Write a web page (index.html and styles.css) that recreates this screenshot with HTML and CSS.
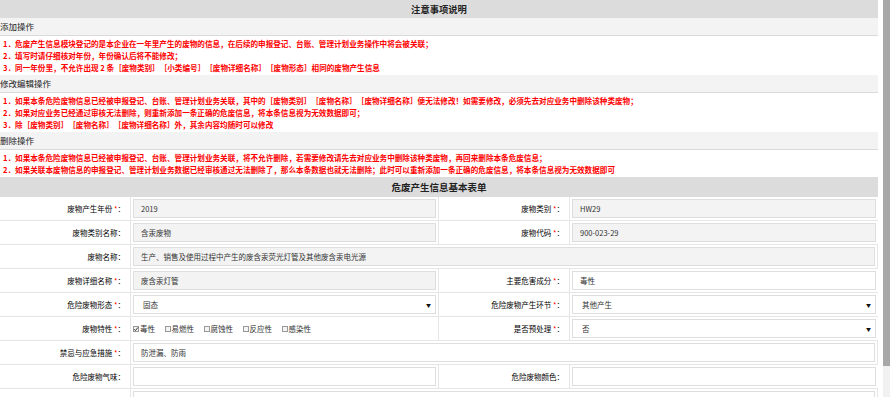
FILE: index.html
```html
<!DOCTYPE html>
<html lang="zh-CN">
<head>
  <meta charset="UTF-8" />
  <title>危废产生信息</title>
  <link rel="stylesheet" href="styles.css">
</head>
<body>
  <div class="page">
    <!-- 注意事项 -->
    <div class="bar">注意事项说明</div>

    <div class="sec-title">添加操作</div>
    <div class="notes">
      <p>1．危废产生信息模块登记的是本企业在一年里产生的废物的信息，在后续的申报登记、台账、管理计划业务操作中将会被关联；</p>
      <p>2．填写时请仔细核对年份，年份确认后将不能修改；</p>
      <p>3．同一年份里，不允许出现 2 条［废物类别］［小类编号］［废物详细名称］［废物形态］相同的废物产生信息</p>
    </div>

    <div class="sec-title">修改编辑操作</div>
    <div class="notes">
      <p>1．如果本条危险废物信息已经被申报登记、台账、管理计划业务关联，其中的［废物类别］［废物名称］［废物详细名称］便无法修改！如需要修改，必须先去对应业务中删除该种类废物；</p>
      <p>2．如果对应业务已经通过审核无法删除，则重新添加一条正确的危废信息，将本条信息视为无效数据即可；</p>
      <p>3．除［废物类别］［废物名称］［废物详细名称］外，其余内容均随时可以修改</p>
    </div>

    <div class="sec-title">删除操作</div>
    <div class="notes">
      <p>1．如果本条危险废物信息已经被申报登记、台账、管理计划业务关联，将不允许删除，若需要修改请先去对应业务中删除该种类废物，再回来删除本条危废信息；</p>
      <p>2．如果关联本废物信息的申报登记、管理计划业务数据已经审核通过无法删除了，那么本条数据也就无法删除；此时可以重新添加一条正确的危废信息，将本条信息视为无效数据即可</p>
    </div>

    <!-- 基本表单 -->
    <div class="bar form-bar">危废产生信息基本表单</div>

    <div class="form-row">
      <div class="label">废物产生年份 <em>*</em>：</div>
      <div class="cell"><div class="field readonly">2019</div></div>
      <div class="label">废物类别 <em>*</em>：</div>
      <div class="cell"><div class="field readonly">HW29</div></div>
    </div>

    <div class="form-row">
      <div class="label">废物类别名称：</div>
      <div class="cell"><div class="field readonly">含汞废物</div></div>
      <div class="label">废物代码 <em>*</em>：</div>
      <div class="cell"><div class="field readonly">900-023-29</div></div>
    </div>

    <div class="form-row">
      <div class="label">废物名称：</div>
      <div class="cell wide"><div class="field readonly">生产、销售及使用过程中产生的废含汞荧光灯管及其他废含汞电光源</div></div>
    </div>

    <div class="form-row">
      <div class="label">废物详细名称 <em>*</em>：</div>
      <div class="cell"><div class="field readonly">废含汞灯管</div></div>
      <div class="label">主要危害成分 <em>*</em>：</div>
      <div class="cell"><div class="field">毒性</div></div>
    </div>

    <div class="form-row">
      <div class="label">危险废物形态 <em>*</em>：</div>
      <div class="cell"><div class="field select"><span>固态</span><span class="arrow">▼</span></div></div>
      <div class="label">危险废物产生环节 <em>*</em>：</div>
      <div class="cell"><div class="field select"><span>其他产生</span><span class="arrow">▼</span></div></div>
    </div>

    <div class="form-row">
      <div class="label">废物特性 <em>*</em>：</div>
      <div class="cell checks">
        <span class="check"><span class="box on"><svg viewBox="0 0 6 6"><path d="M1 3.2 L2.4 4.6 L5 1.4" fill="none" stroke="#333" stroke-width="1"/></svg></span>毒性</span>
        <span class="check"><span class="box"></span>易燃性</span>
        <span class="check"><span class="box"></span>腐蚀性</span>
        <span class="check"><span class="box"></span>反应性</span>
        <span class="check"><span class="box"></span>感染性</span>
      </div>
      <div class="label">是否预处理 <em>*</em>：</div>
      <div class="cell"><div class="field select"><span>否</span><span class="arrow">▼</span></div></div>
    </div>

    <div class="form-row">
      <div class="label">禁忌与应急措施 <em>*</em>：</div>
      <div class="cell wide"><div class="field">防泄漏、防雨</div></div>
    </div>

    <div class="form-row">
      <div class="label">危险废物气味：</div>
      <div class="cell"><div class="field"></div></div>
      <div class="label">危险废物颜色：</div>
      <div class="cell"><div class="field"></div></div>
    </div>

    <div class="form-row">
      <div class="label"></div>
      <div class="cell wide"><div class="field"></div></div>
    </div>
  </div>

  <div class="scrollbar">
    <div class="thumb"></div>
  </div>
</body>
</html>
```

FILE: styles.css
```css
:root {
  --bar-bg: #dcdcdc;
  --sec-bg: #f3f3f3;
  --line: #e6e6e6;
  --field-line: #dedede;
  --text-color: #333;
  --red: #f00;
}

html, body {
  margin: 0;
  height: 397px;
  overflow: hidden;
}

body {
  font-family: "Noto Sans CJK SC", "Liberation Sans", sans-serif;
  color: var(--text-color);
  background-color: white;
  display: flex;
  width: 890px;
  text-spacing-trim: space-all;
}

.page {
  width: 878px;
  flex: none;
}

.scrollbar {
  width: 7px;
  margin-left: 5px;
  height: 397px;
  background-color: #f1f1f1;
}

.thumb {
  height: 366px;
  background-color: #a8a8a8;
}

.bar {
  height: 18px;
  line-height: 18px;
  background-color: var(--bar-bg);
  text-align: center;
  font-size: 9.3px;
  font-weight: bold;
  color: #222;
}

.form-bar {
  height: 20px;
  line-height: 20px;
  font-size: 9.5px;
}

.sec-title {
  height: 17px;
  line-height: 17px;
  background-color: var(--sec-bg);
  border-bottom: 1px solid #dadada;
  font-size: 8.5px;
  color: #222;
}

.notes {
  padding: 2px 0 1px 3px;
  color: var(--red);
  font-size: 7.6px;
  font-weight: bold;
  line-height: 12px;
}

.notes p {
  margin: 0;
  white-space: nowrap;
}

/* form grid */
.form-row {
  display: grid;
  grid-template-columns: 131px 308px 131px 308px;
  border-bottom: 1px solid var(--line);
  font-size: 7.5px;
}

.label {
  border-right: 1px solid var(--line);
  text-align: right;
  padding-right: 5px;
  line-height: 23px;
  color: #000;
}

.label em {
  color: var(--red);
  font-style: normal;
}

.cell {
  padding: 2px;
}

.cell:nth-child(2) {
  border-right: 1px solid var(--line);
}

.cell.wide {
  grid-column: span 3;
}

.field {
  box-sizing: border-box;
  height: 19px;
  line-height: 17px;
  border: 1px solid var(--field-line);
  padding: 0 7px;
  background-color: white;
  white-space: nowrap;
  overflow: hidden;
}

.field.readonly {
  background-color: #f3f3f3;
}

.field.select {
  display: flex;
  justify-content: space-between;
  padding: 0 4px 0 9px;
}

.arrow {
  font-size: 5px;
  color: #111;
}

.checks {
  display: flex;
  align-items: center;
  padding: 0 0 0 2px;
}

.check {
  display: flex;
  align-items: center;
  margin-right: 9.5px;
  line-height: 23px;
}

.box {
  box-sizing: border-box;
  width: 6px;
  height: 6px;
  border: 1px solid #999;
  background-color: #f4f4f4;
  margin-right: 1px;
  display: flex;
}

.box svg {
  width: 6px;
  height: 6px;
  margin: -1px;
}
```
